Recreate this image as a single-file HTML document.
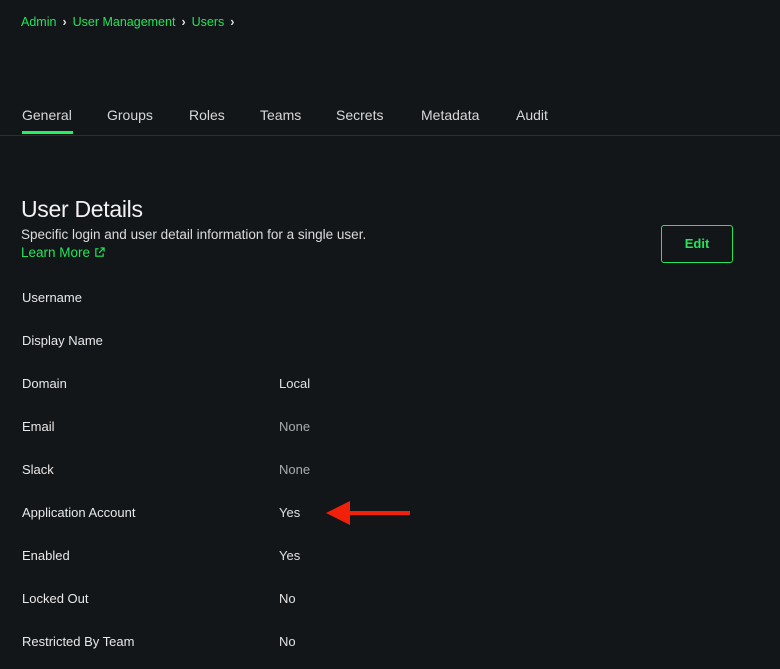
<!DOCTYPE html>
<html><head><style>
body{margin:0;width:780px;height:669px;background:#131619;font-family:"Liberation Sans",sans-serif;position:relative;overflow:hidden;color:#e6e6e6}
.a{position:absolute;white-space:nowrap}
.g{color:#22e55c}
.bc{top:15px;left:21px;font-size:12.5px}
.bc span.s{color:#ddd;margin:0 6px;font-weight:bold}
.tab{top:107px;font-size:14px;color:#d8d8d8}
.lab{left:22px;font-size:13px;color:#e8e8e8}
.val{left:279px;font-size:13px;color:#e0e0e0}
.dim{color:#a9abad}
</style></head><body>
<div class="a bc g">Admin<span class="s">›</span>User Management<span class="s">›</span>Users<span class="s">›</span></div>
<div class="a tab g" style="left:22px">General</div>
<div class="a" style="left:22px;top:131px;width:51px;height:3px;background:#22f060"></div>
<div class="a tab" style="left:107px">Groups</div>
<div class="a tab" style="left:189px">Roles</div>
<div class="a tab" style="left:260px">Teams</div>
<div class="a tab" style="left:336px">Secrets</div>
<div class="a tab" style="left:421px">Metadata</div>
<div class="a tab" style="left:516px">Audit</div>
<div class="a" style="left:0;top:135px;width:780px;height:1px;background:#2a2f36"></div>
<div class="a" style="left:21px;top:196px;font-size:23px;color:#f2f2f2;letter-spacing:-0.3px">User Details</div>
<div class="a" style="left:21px;top:227px;font-size:13.5px;color:#dcdcdc">Specific login and user detail information for a single user.</div>
<div class="a g" style="left:21px;top:245px;font-size:13.5px">Learn More <svg width="11" height="11" viewBox="0 0 12 12" style="vertical-align:-1px"><path d="M5 2H2v8h8V7M7 1h4v4M11 1L5.5 6.5" fill="none" stroke="#22e55c" stroke-width="1.3"/></svg></div>
<div class="a g" style="left:661px;top:225px;width:70px;height:36px;border:1px solid #22e55c;border-radius:3px;text-align:center;line-height:36px;font-size:13px;font-weight:bold">Edit</div>
<div class="a lab" style="top:290px">Username</div>
<div class="a lab" style="top:333px">Display Name</div>
<div class="a lab" style="top:376px">Domain</div><div class="a val" style="top:376px">Local</div>
<div class="a lab" style="top:419px">Email</div><div class="a val dim" style="top:419px">None</div>
<div class="a lab" style="top:462px">Slack</div><div class="a val dim" style="top:462px">None</div>
<div class="a lab" style="top:505px">Application Account</div><div class="a val" style="top:505px">Yes</div>
<div class="a lab" style="top:548px">Enabled</div><div class="a val" style="top:548px">Yes</div>
<div class="a lab" style="top:591px">Locked Out</div><div class="a val" style="top:591px">No</div>
<div class="a lab" style="top:634px">Restricted By Team</div><div class="a val" style="top:634px">No</div>
<svg class="a" style="left:320px;top:500px" width="95" height="26"><polygon points="6,13 30,1 30,25" fill="#f0200a"/><rect x="29" y="11" width="61" height="4" fill="#f0200a"/></svg>
</body></html>
